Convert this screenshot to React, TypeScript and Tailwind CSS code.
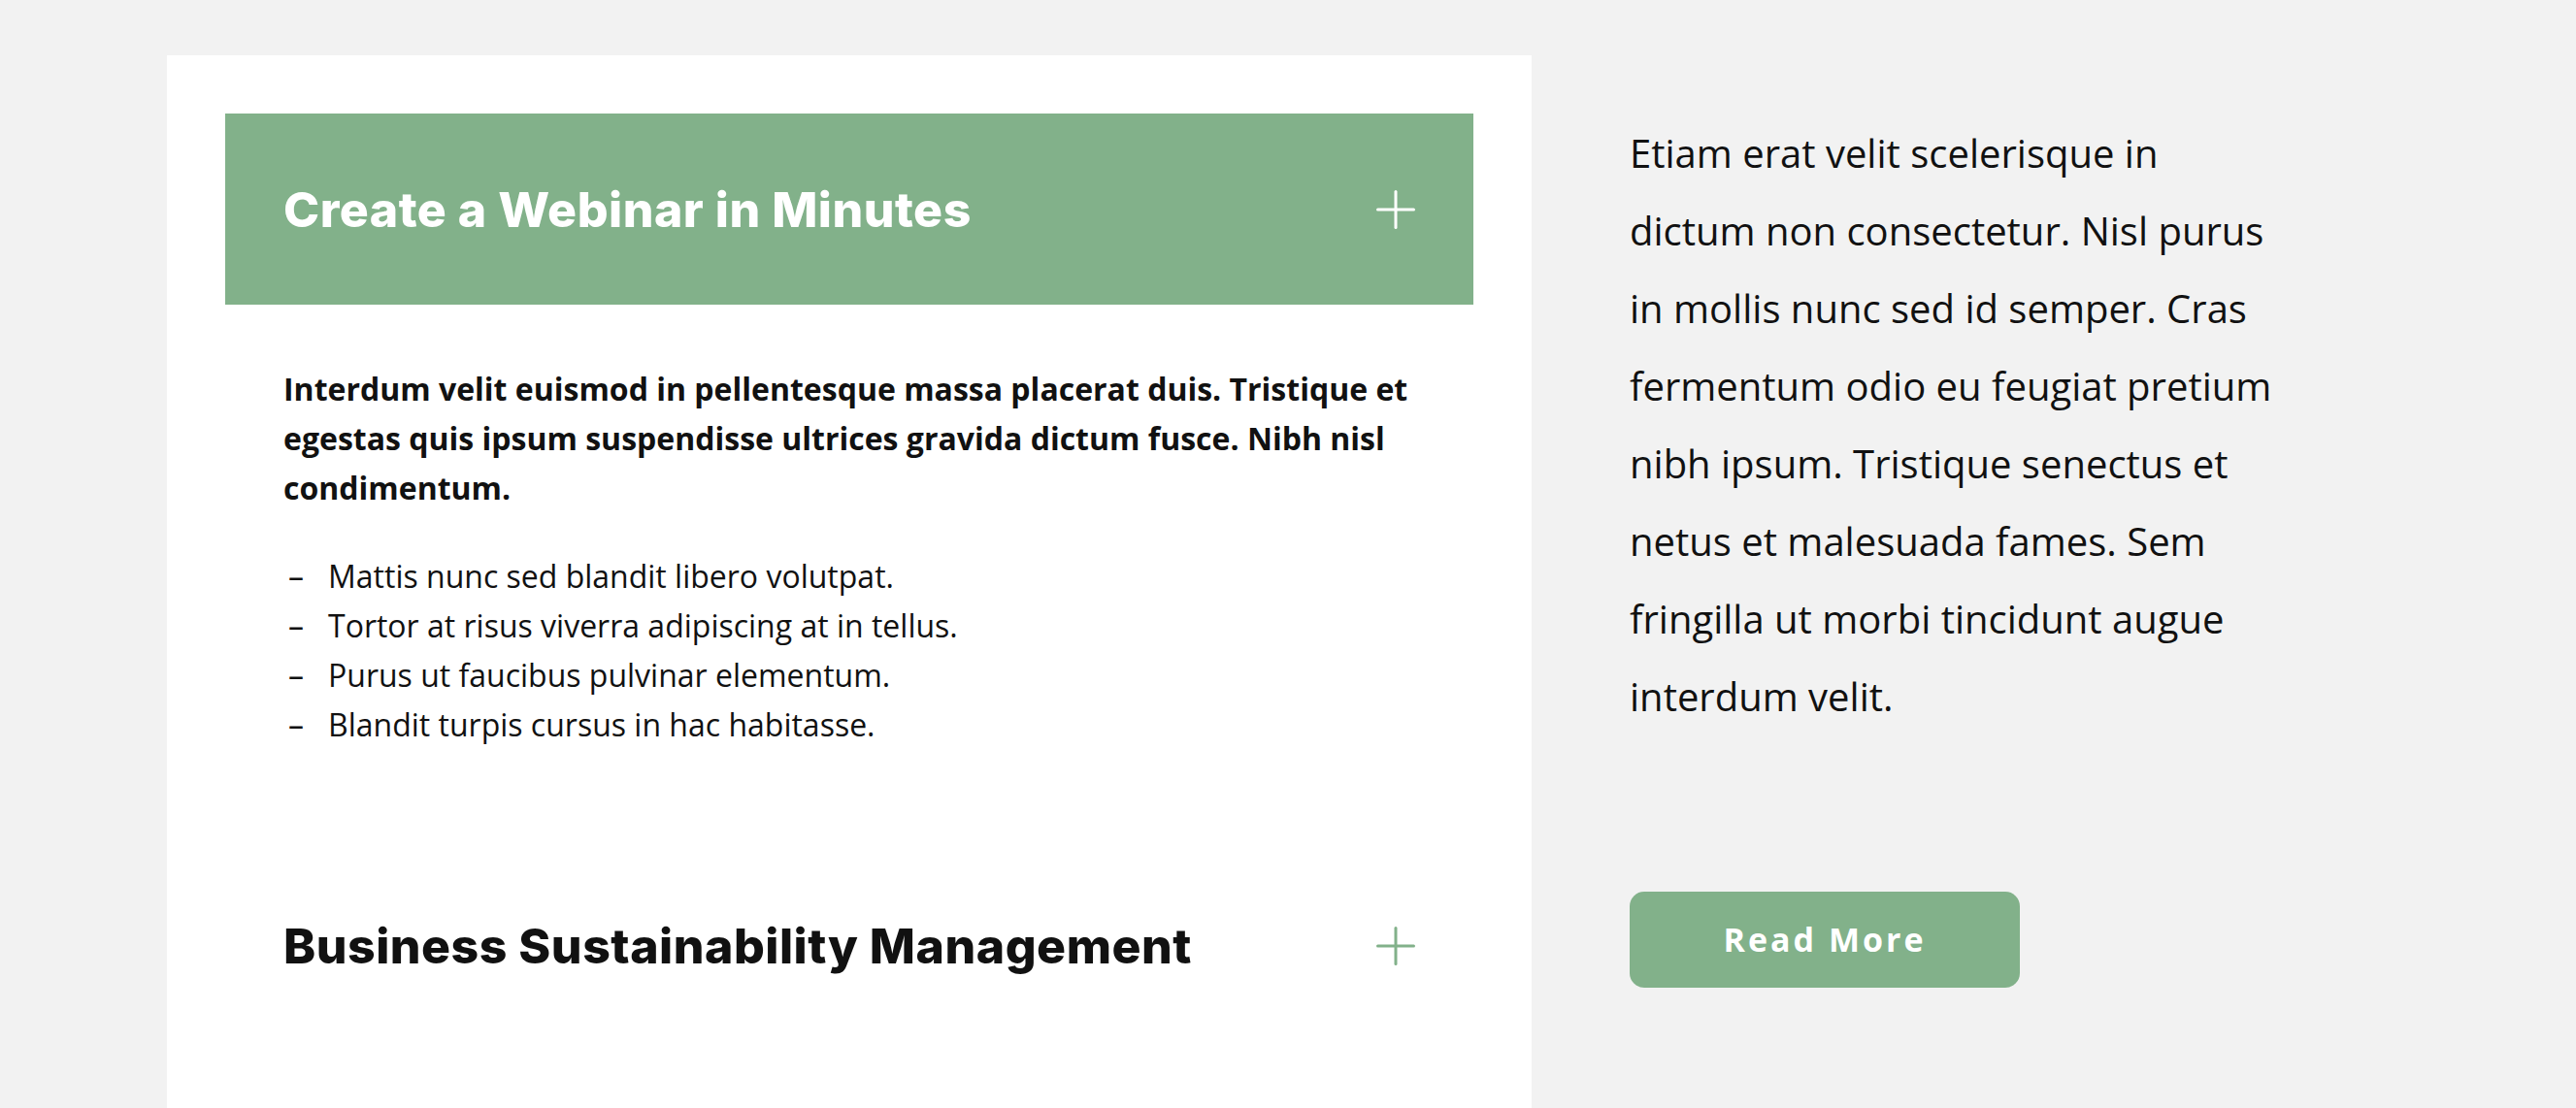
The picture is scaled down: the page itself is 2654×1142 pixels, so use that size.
import React from "react";

const GREEN = "#82b18a";

function Plus({ color }: { color: string }) {
  return (
    <svg width="40" height="40" viewBox="0 0 40 40" fill="none" className="shrink-0">
      <line x1="20" y1="1.5" x2="20" y2="38.5" stroke={color} strokeWidth="3" strokeLinecap="round" />
      <line x1="1.5" y1="20" x2="38.5" y2="20" stroke={color} strokeWidth="3" strokeLinecap="round" />
    </svg>
  );
}

const items = [
  "Mattis nunc sed blandit libero volutpat.",
  "Tortor at risus viverra adipiscing at in tellus.",
  "Purus ut faucibus pulvinar elementum.",
  "Blandit turpis cursus in hac habitasse.",
];

export default function App() {
  return (
    <div
      className="h-[1142px] w-full overflow-hidden bg-[#f2f2f2] text-[#111111]"
      style={{ fontFamily: '"Open Sans", "Noto Sans", sans-serif' }}
    >
      <div className="flex pl-[172px] pt-[57px]">
        {/* Left card */}
        <div className="w-[1406px] h-[1085px] bg-white px-[60px] pt-[60px]">
          <div
            className="flex h-[197px] items-center justify-between px-[60px]"
            style={{ backgroundColor: GREEN }}
          >
            <h2 className="font-['Inter',sans-serif] text-[50px] font-extrabold leading-[60px] tracking-[0.5px] text-white">
              Create a Webinar in Minutes
            </h2>
            <Plus color="#ffffff" />
          </div>

          <div className="px-[60px] pt-[61px] pb-[104px]">
            <p className="text-[32px] font-bold leading-[51px]">
              Interdum velit euismod in pellentesque massa placerat duis. Tristique et egestas quis
              ipsum suspendisse ultrices gravida dictum fusce. Nibh nisl condimentum.
            </p>
            <ul className="mt-[40px]">
              {items.map((t) => (
                <li key={t} className="flex text-[32px] leading-[51px]">
                  <span className="w-[46px] shrink-0 pl-[5px]">–</span>
                  <span>{t}</span>
                </li>
              ))}
            </ul>
          </div>

          <div className="flex h-[197px] items-center justify-between px-[60px]">
            <h2 className="font-['Inter',sans-serif] text-[50px] font-extrabold leading-[60px] tracking-[0.5px] text-[#111111]">
              Business Sustainability Management
            </h2>
            <Plus color={GREEN} />
          </div>
        </div>

        {/* Right column */}
        <div className="ml-[101px] w-[670px] pt-[61px]">
          <p className="text-[40px] leading-[80px]">
            Etiam erat velit scelerisque in dictum non consectetur. Nisl purus in mollis nunc sed id
            semper. Cras fermentum odio eu feugiat pretium nibh ipsum. Tristique senectus et netus et
            malesuada fames. Sem fringilla ut morbi tincidunt augue interdum velit.
          </p>
          <button
            className="mt-[161px] flex h-[99px] w-[402px] items-center justify-center rounded-[15px] text-[34px] font-bold tracking-[3px] text-white"
            style={{ backgroundColor: GREEN }}
          >
            Read More
          </button>
        </div>
      </div>
    </div>
  );
}
